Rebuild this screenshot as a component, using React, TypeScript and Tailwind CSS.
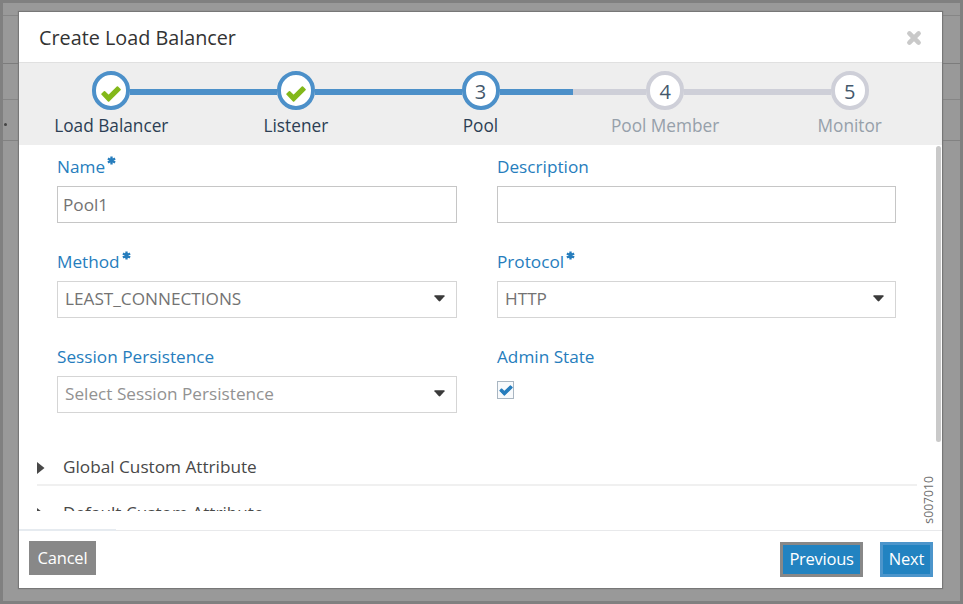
type StepState = "done" | "active" | "todo";

const steps: { label: string; state: StepState }[] = [
  { label: "Load Balancer", state: "done" },
  { label: "Listener", state: "done" },
  { label: "Pool", state: "active" },
  { label: "Pool Member", state: "todo" },
  { label: "Monitor", state: "todo" },
];

function CheckMark({ className }: { className: string }) {
  return (
    <svg viewBox="0 0 20 16" className={className} fill="currentColor" stroke="currentColor">
      <path
        d="M1.2 8.2L3.5 5.9L7.6 9.8L16.4 1.2L18.9 3.7L7.6 14.8z"
        strokeWidth="1.8"
        strokeLinejoin="round"
      />
    </svg>
  );
}

function Step({ label, state, index }: { label: string; state: StepState; index: number }) {
  const todo = state === "todo";
  const line = todo ? "bg-[#cecfd8]" : "bg-[#4c90c9]";
  return (
    <li className="flex flex-col items-center">
      <div className="flex w-full items-center">
        <span className={`mt-[3px] h-[6px] flex-1 ${index === 0 ? "" : line}`} />
        <span
          className={`flex h-[39px] w-[38px] items-center justify-center rounded-full border-4 bg-white text-[20px] leading-none text-[#44586c] ${
            todo ? "border-[#cecfd8]" : "border-[#4c90c9]"
          }`}
        >
          {state === "done" ? (
            <CheckMark className="mt-[6px] h-[16px] w-[20px] shrink-0 text-[#83b81a]" />
          ) : (
            <span className="mt-[2px]">{index + 1}</span>
          )}
        </span>
        <span className={`mt-[3px] h-[6px] flex-1 ${index === 4 ? "" : line}`} />
      </div>
      <span className={`mt-[4px] text-[17.25px] leading-6 ${todo ? "text-[#96a0aa]" : "text-[#2c3e54]"}`}>
        {label}
      </span>
    </li>
  );
}

function Label({ text, required }: { text: string; required?: boolean }) {
  return (
    <div className="flex h-[22px] items-start text-[17.2px] leading-[22px] text-[#267dbd]">
      <span className="pt-px">{text}</span>
      {required && (
        <svg viewBox="0 0 10 10" className="mt-px ml-[2px] h-[9px] w-[9px]" stroke="currentColor" strokeWidth="2.6">
          <path d="M5 0.5V9.5M1 2.7L9 7.3M9 2.7L1 7.3" />
        </svg>
      )}
    </div>
  );
}

function Select({ value, placeholder }: { value: string; placeholder?: boolean }) {
  return (
    <button
      className={`mt-[9px] flex h-[37px] w-full items-center justify-between border border-[#d5d5d5] bg-white pr-[11px] pl-[7px] text-[17.2px] ${
        placeholder ? "text-[#929292]" : "text-[#737373]"
      }`}
    >
      <span className="pb-px">{value}</span>
      <svg viewBox="0 0 12 7" className="mb-[3px] h-[7px] w-[11px] fill-[#3a3a3a]">
        <path d="M1 0h10q1 .2.5 1L6.9 6.3q-.9.9-1.8 0L.5 1Q0 .2 1 0z" />
      </svg>
    </button>
  );
}

function Section({ title }: { title: string }) {
  return (
    <div className="h-[46px] border-b-2 border-[#f0f0f0] text-[17.2px] text-[#484848]">
      <div className="flex h-[44px] items-center pt-[9px]">
        <svg viewBox="0 0 8 12" className="mt-[2px] h-[12px] w-[8px] fill-[#484848]">
          <path d="M0 0L7.5 6L0 12z" />
        </svg>
        <span className="ml-[18px]">{title}</span>
      </div>
    </div>
  );
}

export default function App() {
  return (
    <div className="relative h-[604px] w-[963px] overflow-hidden border-[3px] border-[#808080] bg-[#999] font-['Open_Sans',sans-serif]">
      <div className="absolute inset-0">
        <div className="h-[13px] border-b border-[#868686]" />
        <div className="h-[48px] border-b border-[#7c7c7c]" />
        <div className="h-[36px] border-b border-[#868686]" />
        <div className="flex h-[41px] items-center border-b border-[#828282]">
          <span className="mt-[9px] ml-px h-[3px] w-[3px] rounded-full bg-[#444]" />
        </div>
      </div>

      <main className="relative mt-[9px] ml-[16px] flex h-[576px] w-[923px] flex-col bg-white shadow-[0_0_1px_1px_#777]">
        <header className="flex h-[51px] shrink-0 items-center justify-between border-b border-[#e0e0e0] pt-px pr-[20px] pl-[20px]">
          <h1 className="text-[19.8px] text-[#333]">Create Load Balancer</h1>
          <svg viewBox="0 0 16 16" className="size-[16px] text-[#c9c9c9]" stroke="currentColor" strokeWidth="4.6" strokeLinecap="round">
            <path d="M3.4 3.4L12.6 12.6M12.6 3.4L3.4 12.6" />
          </svg>
        </header>

        <ol className="grid h-[82px] shrink-0 grid-cols-5 bg-[#eee] pt-[8px]">
          {steps.map((s, i) => (
            <Step key={s.label} label={s.label} state={s.state} index={i} />
          ))}
        </ol>

        <div className="flex h-[384px] shrink-0">
          <div className="h-[366px] w-[898px] overflow-hidden pl-[18px]">
            <div className="grid grid-cols-[400px_399px] gap-x-[40px] pt-[10px] pl-[20px]">
              <div className="h-[95px]">
                <Label text="Name" required />
                <input
                  defaultValue="Pool1"
                  className="mt-[9px] h-[37px] w-full border border-[#c6c6c6] bg-white pl-[5px] text-[17.2px] text-[#737373]"
                />
              </div>
              <div className="h-[95px]">
                <Label text="Description" />
                <input className="mt-[9px] h-[37px] w-full border border-[#c6c6c6] bg-white pl-[5px]" />
              </div>
              <div className="h-[95px]">
                <Label text="Method" required />
                <Select value="LEAST_CONNECTIONS" />
              </div>
              <div className="h-[95px]">
                <Label text="Protocol" required />
                <Select value="HTTP" />
              </div>
              <div className="h-[95px]">
                <Label text="Session Persistence" />
                <Select value="Select Session Persistence" placeholder />
              </div>
              <div className="h-[95px]">
                <Label text="Admin State" />
                <span className="mt-[14px] flex h-[18px] w-[17px] items-center justify-center border border-[#a9b6c2] bg-[#f8fafc]">
                  <CheckMark className="mt-px h-[11px] w-[14px] shrink-0 text-[#267dbd]" />
                </span>
              </div>
            </div>
            <div>
              <Section title="Global Custom Attribute" />
              <Section title="Default Custom Attribute" />
            </div>
          </div>
          <div className="flex w-[25px] flex-col items-end pt-px pr-px">
            <div className="h-[296px] w-[5px] rounded-full bg-[#c9c9c9]" />
            <span className="mt-[34px] mr-[5px] rotate-180 self-end text-[12.2px] leading-[14px] text-[#6d6d6d] [writing-mode:vertical-rl]">
              s007010
            </span>
          </div>
        </div>

        <footer className="flex flex-1 flex-col">
          <div className="h-[2px] border-b border-[#e8e9eb]">
            <div className="h-[2px] w-[97px] bg-[#e6ebf0]" />
          </div>
          <div className="flex items-start pt-[10px] pr-[9px] pl-[10px] text-[16.5px] text-white">
            <button className="h-[34px] w-[67px] bg-[#888] tracking-[-0.2px]">Cancel</button>
            <button className="mt-[1px] ml-auto h-[35px] w-[83px] border-[3px] border-[#888] bg-[#2283c1] pb-px font-medium tracking-[-0.25px]">
              Previous
            </button>
            <button className="mt-[1px] ml-[17px] h-[35px] w-[53px] border-[3px] border-[#4c95cb] bg-[#2283c1] pb-px font-medium tracking-[-0.2px]">
              Next
            </button>
          </div>
        </footer>
      </main>
    </div>
  );
}
